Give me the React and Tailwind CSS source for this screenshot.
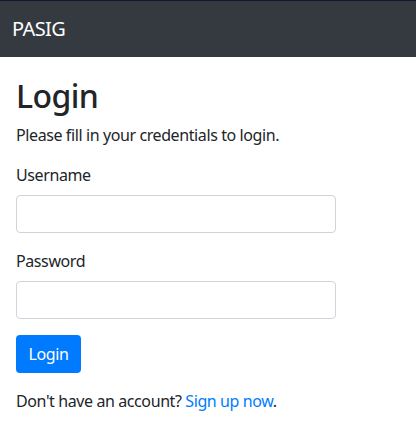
export default function App() {
  return (
    <div className="min-h-[442px] bg-white text-[#212529] font-['Segoe_UI','Noto_Sans',sans-serif] tracking-[-0.4px]">
      <div className="border-t border-[#1c1430]">
        <nav className="h-[56px] bg-[#343a40] flex items-center px-4">
          <span className="text-white text-[20px] leading-[30px] -ml-[4px] tracking-[-0.6px]">PASIG</span>
        </nav>
      </div>
      <div className="w-[352px] px-4 pt-[20px]">
        <h2 className="text-[32px] leading-[38px] font-medium mb-[8px] tracking-[-0.6px]">Login</h2>
        <p className="text-[16px] leading-[24px] mb-[16px]">Please fill in your credentials to login.</p>
        <form onSubmit={(e) => e.preventDefault()}>
          <div className="mb-[16px]">
            <label className="block text-[16px] leading-[24px] mb-[8px]">Username</label>
            <input type="text" className="block w-full h-[38px] border border-[#ced4da] rounded-[4px] px-3 outline-none" />
          </div>
          <div className="mb-[16px]">
            <label className="block text-[16px] leading-[24px] mb-[8px]">Password</label>
            <input type="password" className="block w-full h-[38px] border border-[#ced4da] rounded-[4px] px-3 outline-none" />
          </div>
          <div className="mb-[16px]">
            <button type="submit" className="h-[38px] w-[65px] bg-[#007bff] text-white text-[16px] rounded-[4px]">Login</button>
          </div>
          <p className="text-[16px] leading-[24px]">
            Don't have an account? <a href="#" className="text-[#007bff]">Sign up now</a>.
          </p>
        </form>
      </div>
    </div>
  );
}
